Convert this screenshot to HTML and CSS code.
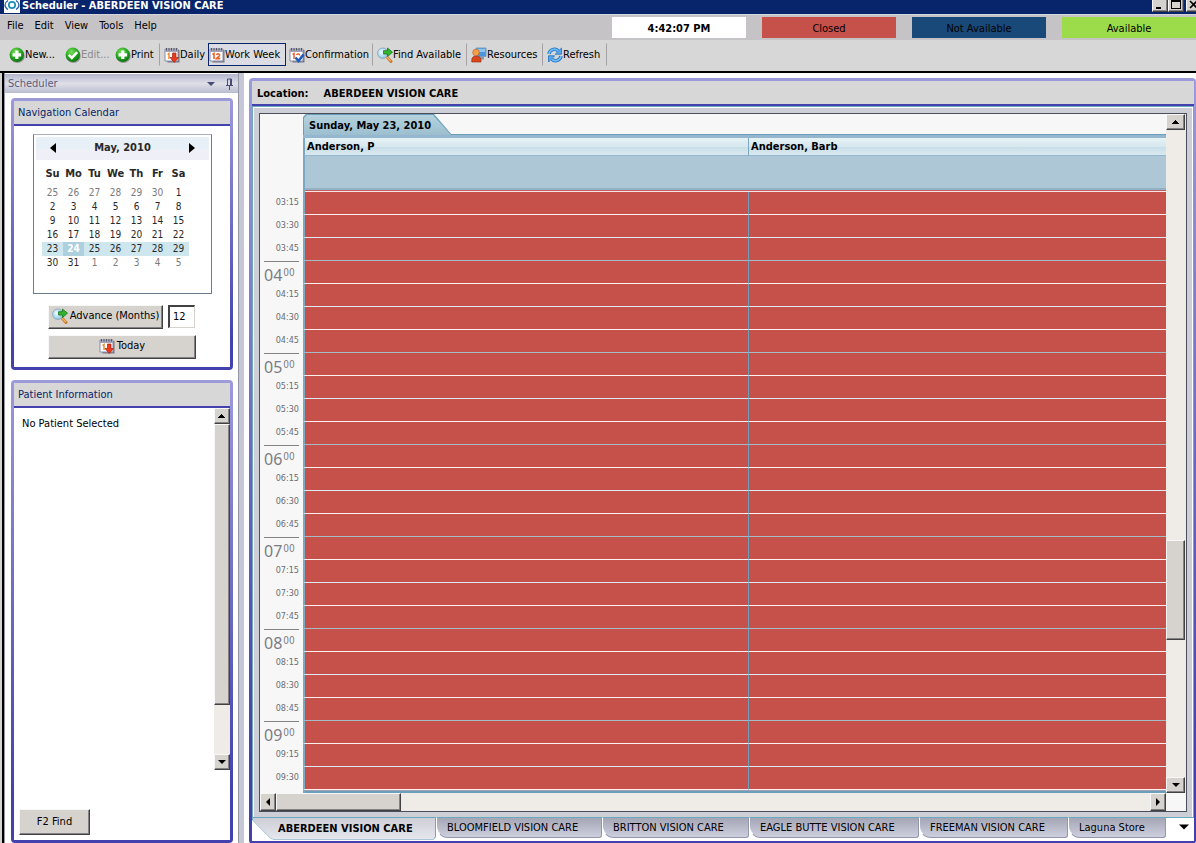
FILE: index.html
```html
<!DOCTYPE html>
<html lang="en">
<head>
<meta charset="utf-8">
<title>Scheduler - ABERDEEN VISION CARE</title>
<link rel="stylesheet" href="styles.css">
</head>
<body>
<svg class="defs" aria-hidden="true">
  <defs>
    <radialGradient id="g-green" cx=".4" cy=".3" r=".75"><stop offset="0" stop-color="#7be05a"/><stop offset=".6" stop-color="#1fa01c"/><stop offset="1" stop-color="#0b6a10"/></radialGradient>
    <radialGradient id="g-lens" cx=".4" cy=".4" r=".7"><stop offset="0" stop-color="#f4fcff"/><stop offset="1" stop-color="#7fc0e6"/></radialGradient>
  </defs>
  <symbol id="i-plus" viewBox="0 0 16 16"><ellipse cx="8.5" cy="9" rx="7.3" ry="7" fill="#9a9a9a"/><circle cx="7.8" cy="7.8" r="7.2" fill="url(#g-green)"/><path d="M6.2 3.5h3.2v2.7h2.7v3.2H9.4v2.7H6.2V9.4H3.5V6.2h2.7z" fill="#fff"/></symbol>
  <symbol id="i-check" viewBox="0 0 16 16"><ellipse cx="8.5" cy="9" rx="7.3" ry="7" fill="#9a9a9a"/><circle cx="7.8" cy="7.8" r="7.2" fill="url(#g-green)"/><path d="M3.8 7.8l3 3 5.4-5.6" fill="none" stroke="#fff" stroke-width="2.6"/></symbol>
  <symbol id="i-cal" viewBox="0 0 16 16"><path d="M2.5 3h13v12.500h-12z" fill="#77777f"/><path d="M1 2h13v12H1z" fill="#fff" stroke="#8a8ca8" stroke-width="1"/><path d="M1 2h13v3H1z" fill="#a4a6b8"/><path d="M2.500 1v2.500M5 1v2.500M7.500 1v2.500M10 1v2.500M12.500 1v2.500" stroke="#555566" stroke-width="1"/><path d="M3.500 7.500l1.500-1V12M7.500 8c.6-1.800 3.600-1.200 3 .6-.4 1-2 1.800-3 3h3.800" fill="none" stroke="#f0622c" stroke-width="1.600"/></symbol>
  <symbol id="i-day" viewBox="0 0 16 16"><path d="M2.500 3h13v12.500h-12z" fill="#77777f"/><path d="M1 2h13v12H1z" fill="#fff" stroke="#8a8ca8" stroke-width="1"/><path d="M1 2h13v3H1z" fill="#a4a6b8"/><path d="M2.500 1v2.500M5 1v2.500M7.500 1v2.500M10 1v2.500M12.500 1v2.500" stroke="#555566" stroke-width="1"/><path d="M3.500 7.500l1.500-1V12" fill="none" stroke="#f08a2c" stroke-width="1.500"/><path d="M8.500 6h3.500v4.500h2.500L10.250 15.500 6 10.500h2.500z" fill="#ee3a1c" stroke="#a82010" stroke-width=".7"/></symbol>
  <symbol id="i-conf" viewBox="0 0 16 16"><path d="M2.500 3h13v12.500h-12z" fill="#77777f"/><path d="M1 2h13v12H1z" fill="#fff" stroke="#8a8ca8" stroke-width="1"/><path d="M1 2h13v3H1z" fill="#a4a6b8"/><path d="M2.500 1v2.500M5 1v2.500M7.500 1v2.500M10 1v2.500M12.500 1v2.500" stroke="#555566" stroke-width="1"/><path d="M3.500 7.500l1.500-1V12M7.500 8c.6-1.800 3.600-1.200 3 .6" fill="none" stroke="#f0622c" stroke-width="1.500"/><path d="M6.500 10.500l3 3.500 5-6.500" fill="none" stroke="#1d5cc0" stroke-width="2.600"/></symbol>
  <symbol id="i-find" viewBox="0 0 16 16"><path d="M9.500 9.500l4.500 5" stroke="#c9782c" stroke-width="3" stroke-linecap="round"/><path d="M9.500 9.500l4.200 4.500" stroke="#f6b45c" stroke-width="1.400"/><circle cx="5.800" cy="6.200" r="5.200" fill="url(#g-lens)" stroke="#8fa9bb" stroke-width="1"/><path d="M6.500 3.700h4V1l5 4.200-5 4.300V7h-4z" fill="#35b52c" stroke="#14761a" stroke-width=".8"/></symbol>
  <symbol id="i-res" viewBox="0 0 16 16"><path d="M5 1h10v8.500H5z" fill="#4a94dc" stroke="#7c9dbd" stroke-width="1"/><path d="M6 2h8v3H6z" fill="#8cc4f2"/><path d="M9 10h4v2.500H9z" fill="#8a99aa"/><path d="M.8 15c-.6-4 1-6 4.400-6s5.300 2 4.800 6z" fill="#d9481c" stroke="#8d2a10" stroke-width=".6"/><circle cx="5" cy="5.500" r="3.300" fill="#f5a14a" stroke="#b45e1c" stroke-width=".6"/></symbol>
  <symbol id="i-ref" viewBox="0 0 16 16"><path d="M2 7c.6-4.500 6-6 9-3.400M14 9c-.6 4.500-6 6-9 3.400" fill="none" stroke="#1f6fc4" stroke-width="3.400"/><path d="M2 7c.6-4.500 6-6 9-3.400M14 9c-.6 4.500-6 6-9 3.400" fill="none" stroke="#6fbcf4" stroke-width="1.800"/><path d="M14.500 1v6.200H8.300zM1.500 15V8.800h6.200z" fill="#58aaf0" stroke="#1f6fc4" stroke-width=".8"/></symbol>
  <symbol id="a-up" viewBox="0 0 8 8"><path d="M0 6h7v-1H6V4H5V3H4V2H3v1H2v1H1v1H0z"/></symbol>
  <symbol id="a-down" viewBox="0 0 8 8"><path d="M0 2h8L4 6z"/></symbol>
  <symbol id="a-left" viewBox="0 0 8 8"><path d="M6 0v8L2 4z"/></symbol>
  <symbol id="a-right" viewBox="0 0 8 8"><path d="M2 0v8l4-4z"/></symbol>
</svg>

<header class="titlebar">
  <svg class="logo" viewBox="0 0 16 13" aria-hidden="true"><path d="M0 0h16v13H0z" fill="#fff"/><path d="M4 .5C0 3 0 7 4 9.500M12 .5c4 2.500 4 6.500 0 9" fill="none" stroke="#2a62ac" stroke-width="1.300"/><circle cx="8" cy="5" r="3.200" fill="#fff" stroke="#1b8fb8" stroke-width="1.700"/></svg>
  <h1>Scheduler - ABERDEEN VISION CARE</h1>
  <div class="win-controls">
    <button class="bevel" aria-label="Minimize"><svg viewBox="0 0 10 10"><path d="M1 7h5v2H1z"/></svg></button>
    <button class="bevel" aria-label="Maximize"><svg viewBox="0 0 10 10"><path d="M0 0h10v9H0zM1 2v6h8V2z" fill-rule="evenodd"/></svg></button>
    <button class="bevel close" aria-label="Close"><svg viewBox="0 0 10 10"><path d="M1 1l7 7M8 1L1 8" stroke="#000" stroke-width="1.600"/></svg></button>
  </div>
</header>

<div class="menubar">
  <nav class="menu"><button>File</button><button>Edit</button><button>View</button><button>Tools</button><button>Help</button></nav>
  <div class="legend">
    <div class="clock">4:42:07 PM</div><div class="closed">Closed</div><div class="unavailable">Not Available</div><div class="available">Available</div>
  </div>
</div>

<div class="toolbar">
  <button class="t-new"><svg><use href="#i-plus"/></svg>New...</button>
  <button class="t-edit" disabled><svg><use href="#i-check"/></svg>Edit...</button>
  <button class="t-print last"><svg><use href="#i-plus"/></svg>Print</button>
  <button class="t-daily"><svg><use href="#i-day"/></svg>Daily</button>
  <button class="t-week active" aria-pressed="true"><svg><use href="#i-cal"/></svg>Work Week</button>
  <button class="t-conf last"><svg><use href="#i-conf"/></svg>Confirmation</button>
  <button class="t-find last"><svg><use href="#i-find"/></svg>Find Available</button>
  <button class="t-res last"><svg><use href="#i-res"/></svg>Resources</button>
  <button class="t-ref last"><svg><use href="#i-ref"/></svg>Refresh</button>
</div>

<div class="workspace">
  <aside class="sidebar">
    <div class="dock-title"><h2>Scheduler</h2>
      <button aria-label="Panel menu"><svg viewBox="0 0 8 8"><use href="#a-down"/></svg></button>
      <button aria-label="Pin panel"><svg class="pin" viewBox="0 0 8 12"><path d="M1 7.500h7M2.500 7.500V1h4v6.500M5.500 1v6.500M4.500 8v4" fill="none" stroke="#4a4c78"/></svg></button>
    </div>
    <section class="panel">
      <div class="panel-inner">
        <h3>Navigation Calendar</h3>
        <div class="nav-body">
          <div class="calendar">
            <div class="cal-head"><button aria-label="Previous month"><svg viewBox="0 0 8 10"><path d="M7 0v10L1 5z"/></svg></button><span>May, 2010</span><button aria-label="Next month"><svg viewBox="0 0 8 10"><path d="M1 0v10l6-5z"/></svg></button></div>
            <table>
              <thead><tr><th>Su</th><th>Mo</th><th>Tu</th><th>We</th><th>Th</th><th>Fr</th><th>Sa</th></tr></thead>
              <tbody>
                <tr><td class="dim">25</td><td class="dim">26</td><td class="dim">27</td><td class="dim">28</td><td class="dim">29</td><td class="dim">30</td><td>1</td></tr>
                <tr><td>2</td><td>3</td><td>4</td><td>5</td><td>6</td><td>7</td><td>8</td></tr>
                <tr><td>9</td><td>10</td><td>11</td><td>12</td><td>13</td><td>14</td><td>15</td></tr>
                <tr><td>16</td><td>17</td><td>18</td><td>19</td><td>20</td><td>21</td><td>22</td></tr>
                <tr class="week"><td>23</td><td class="today">24</td><td>25</td><td>26</td><td>27</td><td>28</td><td>29</td></tr>
                <tr><td>30</td><td>31</td><td class="dim">1</td><td class="dim">2</td><td class="dim">3</td><td class="dim">4</td><td class="dim">5</td></tr>
              </tbody>
            </table>
          </div>
          <div class="advance"><button class="bevel"><svg class="icon"><use href="#i-find"/></svg>Advance (Months)</button><input type="text" value="12" aria-label="Months to advance"></div>
          <button class="bevel go-today"><svg class="icon"><use href="#i-day"/></svg>Today</button>
        </div>
      </div>
    </section>
    <section class="panel patient">
      <div class="panel-inner">
        <h3>Patient Information</h3>
        <div class="patient-view">
          <p>No Patient Selected</p>
          <div class="scroll-v">
            <button class="bevel" aria-label="Scroll up"><svg><use href="#a-up"/></svg></button>
            <div class="thumb bevel"></div><div class="rest"></div>
            <button class="bevel" aria-label="Scroll down"><svg><use href="#a-down"/></svg></button>
          </div>
        </div>
        <div class="patient-foot"><button class="bevel">F2 Find</button></div>
      </div>
    </section>
  </aside>

  <main class="panel location">
    <div class="panel-inner">
      <div class="loc-head"><span>Location:</span><span>ABERDEEN VISION CARE</span></div>
      <div class="frame">
        <div class="sheet">
          <div class="sheet-row">
            <table class="schedule">
              <colgroup><col class="c-time"><col class="c-first"><col></colgroup>
              <thead>
                <tr class="date"><th></th><th colspan="2"><div class="date-tab"><span>Sunday, May 23, 2010</span></div></th></tr>
                <tr class="names"><th></th><th scope="col">Anderson, P</th><th scope="col">Anderson, Barb</th></tr>
                <tr class="allday"><th></th><td></td><td></td></tr>
              </thead>
              <tbody>
                <tr><th>03:15</th><td></td><td></td></tr>
                <tr class="half"><th>03:30</th><td></td><td></td></tr>
                <tr class="end"><th>03:45</th><td></td><td></td></tr>
                <tr class="hour"><th><div>04<sup>00</sup></div></th><td></td><td></td></tr>
                <tr class="half"><th>04:15</th><td></td><td></td></tr>
                <tr><th>04:30</th><td></td><td></td></tr>
                <tr class="end"><th>04:45</th><td></td><td></td></tr>
                <tr class="hour"><th><div>05<sup>00</sup></div></th><td></td><td></td></tr>
                <tr class="half"><th>05:15</th><td></td><td></td></tr>
                <tr><th>05:30</th><td></td><td></td></tr>
                <tr class="end"><th>05:45</th><td></td><td></td></tr>
                <tr class="hour"><th><div>06<sup>00</sup></div></th><td></td><td></td></tr>
                <tr class="half"><th>06:15</th><td></td><td></td></tr>
                <tr><th>06:30</th><td></td><td></td></tr>
                <tr class="end"><th>06:45</th><td></td><td></td></tr>
                <tr class="hour"><th><div>07<sup>00</sup></div></th><td></td><td></td></tr>
                <tr class="half"><th>07:15</th><td></td><td></td></tr>
                <tr><th>07:30</th><td></td><td></td></tr>
                <tr class="end"><th>07:45</th><td></td><td></td></tr>
                <tr class="hour"><th><div>08<sup>00</sup></div></th><td></td><td></td></tr>
                <tr class="half"><th>08:15</th><td></td><td></td></tr>
                <tr><th>08:30</th><td></td><td></td></tr>
                <tr class="end"><th>08:45</th><td></td><td></td></tr>
                <tr class="hour"><th><div>09<sup>00</sup></div></th><td></td><td></td></tr>
                <tr class="half"><th>09:15</th><td></td><td></td></tr>
                <tr><th>09:30</th><td></td><td></td></tr>
              </tbody>
              <tfoot><tr><th></th><td colspan="2"></td></tr></tfoot>
            </table>
            <div class="scroll-v big">
              <button class="bevel" aria-label="Scroll up"><svg><use href="#a-up"/></svg></button>
              <div class="rest before"></div><div class="thumb bevel"></div><div class="rest"></div>
              <button class="bevel" aria-label="Scroll down"><svg><use href="#a-down"/></svg></button>
            </div>
          </div>
          <div class="scroll-h">
            <button class="bevel" aria-label="Scroll left"><svg><use href="#a-left"/></svg></button>
            <div class="thumb bevel"></div><div class="rest"></div>
            <button class="bevel" aria-label="Scroll right"><svg><use href="#a-right"/></svg></button>
          </div>
        </div>
      </div>
      <nav class="tabs">
        <button class="tab current"><span>ABERDEEN VISION CARE</span></button>
        <button class="tab t-166">BLOOMFIELD VISION CARE</button>
        <button class="tab t-147">BRITTON VISION CARE</button>
        <button class="tab t-170">EAGLE BUTTE VISION CARE</button>
        <button class="tab t-149">FREEMAN VISION CARE</button>
        <button class="tab t-98">Laguna Store</button>
        <button class="more" aria-label="More locations"><svg><use href="#a-down"/></svg></button>
      </nav>
    </div>
  </main>
</div>
</body>
</html>
```
FILE: styles.css
```css
* { box-sizing: border-box; }
body {
  margin: 0;
  min-height: 100vh;
  display: flex;
  flex-direction: column;
  overflow-x: hidden;
  background: #fff;
  color: #000;
  font: 11px/14px "DejaVu Sans Condensed", "Noto Sans", sans-serif;
}
button, input { font: inherit; color: inherit; }
button { margin: 0; padding: 0; border: 0; background: none; white-space: nowrap; }
h1, h2, h3, p { margin: 0; font-size: 11px; font-weight: normal; }
.defs { position: absolute; width: 0; height: 0; }
.bevel {
  background: #d6d3ce;
  border: 1px solid;
  border-color: #f7f7f7 #424142 #424142 #f7f7f7;
  box-shadow: inset -1px -1px 0 #848284;
}

.titlebar {
  height: 14px;
  padding-left: 4px;
  display: flex;
  overflow: hidden;
  background: #08246b;
  color: #fff;
}
.logo { width: 16px; height: 13px; }
.titlebar h1 { flex: 1; padding-left: 2px; line-height: 12px; font-weight: bold; }
.win-controls { display: flex; margin-right: -6px; }
.win-controls button { width: 16px; height: 12px; border-top: 0; display: flex; justify-content: center; }
.win-controls .close { margin-left: 2px; }
.win-controls svg { width: 10px; height: 10px; }

.menubar {
  height: 26px;
  display: flex;
  justify-content: space-between;
  align-items: center;
  background: #c6c3c6;
  border-top: 1px solid #d6d7de;
}
.menu { display: flex; gap: 11px; padding-left: 7px; margin-bottom: 4px; }
.legend { display: flex; gap: 16px; }
.legend div { width: 134px; height: 21px; line-height: 23px; text-align: center; margin-bottom: 1px; }
.clock { background: #fff; font-weight: bold; }
.closed { background: #c6514a; }
.unavailable { background: #184979; }
.available { background: #9cdb4a; }

.toolbar {
  height: 33px;
  padding: 3px 0 0 8px;
  display: flex;
  gap: 2px;
  background: #d6d7d6;
  border-bottom: 2px solid #000;
}
.toolbar button { height: 23px; display: flex; align-items: center; border: 1px solid transparent; }
.toolbar svg { width: 16px; height: 16px; flex: none; }
.toolbar button:disabled { color: #8c8a8c; }
.toolbar .active { border-color: #08246b; background: #dcdde4; }
.toolbar .last { border-right-color: #a5a2a5; margin-right: 1px; }
.t-new { width: 54px; }
.t-edit { width: 48px; }
.t-print { width: 46px; }
.t-daily { width: 43px; }
.t-week { width: 78px; }
.t-conf { width: 85px; }
.t-find { width: 91px; }
.t-res { width: 73px; }
.t-ref { width: 61px; }

.workspace { flex: 1; display: flex; border-left: 2px solid #d6d3ce; }
.sidebar {
  width: 242px;
  flex: none;
  display: flex;
  flex-direction: column;
  gap: 10px;
  padding: 1px 4px 1px 1px;
  border-left: 2px solid #000;
  border-right: 5px solid #c6c7d6;
  box-shadow: inset -1px 0 0 #9496a5, inset 1px 0 0 #9496a5;
}
.dock-title {
  height: 19px;
  margin-right: -3px;
  margin-bottom: -5px;
  padding: 0 5px 0 3px;
  display: flex;
  align-items: center;
  gap: 10px;
  color: #5a5d7b;
  background: linear-gradient(#b5b6ce, #dedfe7 50%, #babdd0);
}
.dock-title h2 { flex: 1; }
.dock-title svg { width: 8px; height: 8px; fill: #4a4c78; display: block; }
.dock-title .pin { height: 12px; }
.panel {
  padding: 3px;
  border-radius: 4px;
  background: linear-gradient(#9c9adb, #4241ad 90%);
}
.sidebar .panel { margin: 0 2px 0 6px; }
.panel-inner { background: #fff; height: 100%; display: flex; flex-direction: column; }
.panel h3 {
  height: 25px;
  padding-left: 4px;
  line-height: 23px;
  color: #08246b;
  background: #d6d7d6;
  border-bottom: 2px solid #4241ad;
}
.nav-body { padding: 8px 19px 8px; height: 241px; }
.calendar {
  width: 179px;
  height: 160px;
  padding: 2px;
  border: 1px solid #6b7d8c;
  border-top-color: #a5b2bd;
  color: #292829;
}
.cal-head {
  height: 23px;
  padding: 0 13px 2px;
  display: flex;
  justify-content: space-between;
  align-items: center;
  font-weight: bold;
  background: linear-gradient(#e7eff7 50%, #efeff7 50%);
}
.cal-head svg { width: 8px; height: 10px; display: block; }
.calendar table { margin: 5px 0 0 6px; border-spacing: 0; table-layout: fixed; width: 147px; }
.calendar th, .calendar td { padding: 0; height: 14px; line-height: 14px; text-align: center; }
.calendar th { height: 21px; padding-bottom: 3px; font-size: 11px; }
.calendar td { font-size: 10px; }
.calendar .dim { color: #7b797b; }
.calendar .week { background: #cee7ef; }
.calendar .today { background: #adcfde; color: #fff; font-weight: bold; }
.icon { width: 16px; height: 16px; }
.advance { display: flex; gap: 5px; margin: 11px 0 6px 15px; }
.advance button { width: 115px; height: 24px; }
.advance button, .go-today { display: flex; align-items: center; justify-content: center; gap: 2px; padding-bottom: 2px; }
.advance input { width: 27px; height: 23px; padding: 0 3px 2px; border: 1px solid #d6d3ce; border-top: 2px solid #424142; border-left: 2px solid #424142; background: #fff; }
.go-today { width: 148px; height: 24px; margin-left: 15px; }

.patient { flex: 1; }
.patient-view { height: 362px; display: flex; justify-content: space-between; }
.patient-view p { padding: 9px 0 0 8px; }
.scroll-v { width: 16px; display: flex; flex-direction: column; background: #efebe7; }
.scroll-v button { height: 16px; display: flex; align-items: center; justify-content: center; }
.scroll-v svg, .scroll-h svg { width: 8px; height: 8px; }
.scroll-v .thumb { flex: 281; }
.scroll-v .rest { flex: 49; }
.patient-foot { margin-top: auto; padding: 0 0 5px 5px; }
.patient-foot button { width: 71px; height: 26px; padding-bottom: 1px; }

.location { flex: 1; min-width: 0; margin: 5px 0 0 5px; padding-right: 2px; }
.loc-head {
  height: 25px;
  padding-left: 5px;
  display: flex;
  gap: 15px;
  line-height: 25px;
  font-weight: bold;
  background: #d6d7d6;
  border-bottom: 2px solid #4241ad;
}
.frame {
  padding: 6px 6px 5px;
  border: 1px solid #6baabd;
  border-bottom: 0;
  background: #ceced6;
  box-shadow: inset 1px 1px 0 #fff, inset -1px 0 0 #fff;
}
.sheet { border: 1px solid #4a4d5a; background: #f7f7f7; }
.sheet-row { display: flex; }
.schedule { flex: 1; min-width: 0; table-layout: fixed; border-spacing: 0; }
.c-time { width: 43px; }
.c-first { width: 445px; }
.schedule th, .schedule td { padding: 0; }
.schedule th:first-child { font-weight: normal; background: #f7f7f7; }
.date th { height: 24px; text-align: left; vertical-align: top; }
.date th + th { background: linear-gradient(#f7f7f7 20px, #6b9eb8 20px, #6b9eb8 21px, #94b6ce 21px); }
.date-tab {
  width: 149px;
  height: 21px;
  padding: 1px 0 0 1px;
  background: #6b9eb8;
  clip-path: polygon(0 3px, 3px 0, 131px 0, 149px 21px, 0 21px);
}
.date-tab span {
  display: block;
  height: 20px;
  padding-left: 5px;
  line-height: 21px;
  background: linear-gradient(#b5d3de, #9cbece);
  clip-path: polygon(0 3px, 3px 0, 129px 0, 147px 20px, 0 20px);
}
.names th { height: 18px; text-align: left; line-height: 17px; }
.names th + th {
  padding-left: 2px;
  background: linear-gradient(#e7f3f5, #d6e7ef 50%, #c8dfe8 55%, #dbe8ef);
  border-bottom: 1px solid #94b6ce;
  border-left: 2px solid #7ba9c2;
}
.names th + th + th { border-left-width: 1px; }
.allday td { height: 36px; background: linear-gradient(#adc7d6 32px, #94b2c6 32px, #94b2c6 34px, #c05f60 34px, #c05f60 35px, #f7e7e7 35px); }
.allday th + td { border-left: 2px solid #7ba9c2; }
.schedule tbody th { height: 23px; padding: 0 4px 3px; text-align: right; font-size: 9px; line-height: 20px; color: #6b6d73; }
.schedule tbody td { background: #c6514a; border-bottom: 1px solid #ffeff0; border-left: 2px solid #7ba9c2; }
.schedule tbody td + td { border-left: 1px solid #6b9eb8; }
.schedule .half td { border-bottom-color: #deebf7; }
.schedule .end td { border-bottom-color: #a5bcc8; }
.schedule tbody .hour th { padding-bottom: 0; }
.hour div {
  height: 23px;
  padding-top: 2px;
  border-top: 1px solid #848284;
  text-align: left;
  font: 16px/22px "Noto Sans", sans-serif;
  color: #7b7d84;
}
.hour sup { margin-left: 1px; font: 10px/10px "DejaVu Sans Condensed", sans-serif; vertical-align: 5px; }
.schedule tfoot th, .schedule tfoot td { height: 3px; }
.schedule tfoot td { border-left: 2px solid #7ba9c2; background: linear-gradient(#a59eb0 1px, #6b9eb8 1px); }
.big { width: 20px; }
.big button { height: 16px; width: 19px; }
.big .thumb { flex: 99; width: 19px; }
.big .rest { flex: 137; }
.big .before { flex: 411; }
.scroll-h { height: 18px; margin-right: 20px; display: flex; background: #efebe7; }
.scroll-h button { width: 16px; display: flex; align-items: center; justify-content: center; }
.scroll-h .thumb { width: 125px; }
.scroll-h .rest { flex: 1; }

.tabs { height: 24px; display: flex; align-items: flex-start; }
.tab {
  height: 21px;
  flex: none;
  padding: 0 0 0 10px;
  text-align: left;
  border: 1px solid #9496ad;
  border-top-color: #6baabd;
  border-left-color: #fff;
  border-radius: 0 0 3px 12px;
  background: linear-gradient(#a5a6b5, #cecfde);
}
.tab.current {
  width: 184px;
  height: 23px;
  padding: 0;
  border: 0;
  border-radius: 0;
  background: #6baabd;
  font-weight: bold;
  clip-path: polygon(0 0, 184px 0, 184px 20px, 181px 23px, 22px 23px, 18px 21px, 0 3px);
}
.tab.current span {
  display: block;
  height: 22px;
  margin: 0 1px;
  padding-left: 25px;
  line-height: 22px;
  background: linear-gradient(#ceced6, #e7e7ef);
  clip-path: polygon(0 0, 182px 0, 182px 19px, 180px 22px, 21px 22px, 17px 20px, 0 3px);
}
.t-98 { width: 98px; }
.t-147 { width: 147px; }
.t-149 { width: 149px; }
.t-166 { width: 166px; }
.t-170 { width: 170px; }
.more { flex: 1; height: 21px; padding: 2px 0 0 7px; border-top: 1px solid #6baabd; text-align: center; }
.more svg { width: 10px; height: 10px; }
```
